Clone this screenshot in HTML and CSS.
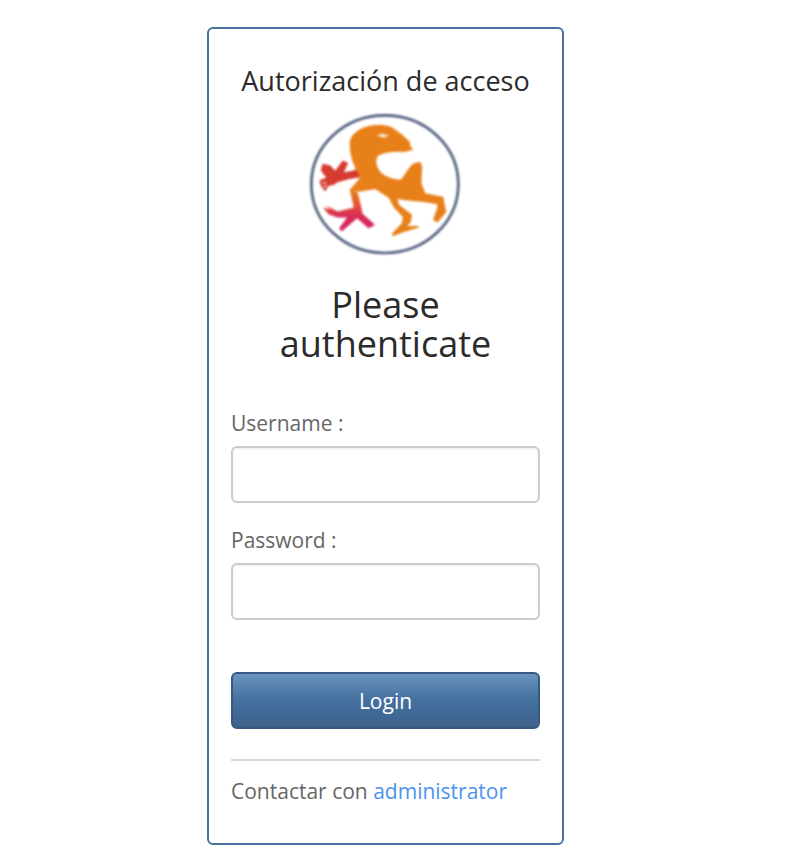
FILE: index.html
```html
<!DOCTYPE html>
<html lang="es">
<head>
  <meta charset="UTF-8">
  <title>Autorización de acceso</title>
  <link rel="stylesheet" href="styles.css">
</head>
<body>

  <div class="page">
    <form class="card">
      <h2 class="app-title">Autorización de acceso</h2>

      <svg class="logo" viewBox="50 30 470 440" width="157" height="147" aria-label="logo">
        <defs>
          <linearGradient id="leg" x1="0" y1="0" x2="0" y2="1">
            <stop offset="0" stop-color="#e8801a"/>
            <stop offset="0.4" stop-color="#e2503a"/>
            <stop offset="0.65" stop-color="#d82a5a"/>
            <stop offset="1" stop-color="#d4265c"/>
          </linearGradient>
        </defs>
        <ellipse cx="283" cy="252" rx="220" ry="206" fill="#fff" stroke="#4e5c7c" stroke-width="8"/>
        <!-- brazo -->
        <path class="limb" d="M215 228 L176 234 L134 246 L112 234 L94 210 L98 194 L118 198 L134 216 L158 184 L170 190 L156 220 L186 214 L210 207 Z" fill="#d63a30" stroke="#d63a30"/>
        <path class="limb" d="M134 240 L106 236 L90 242 L94 256 L104 270 L112 256 L134 250 Z" fill="#d63a30" stroke="#d63a30"/>
        <path d="M96 246 L108 250 M100 262 L108 256" stroke="#fff" stroke-width="3" fill="none"/>
        <!-- pierna y pie -->
        <path class="limb" d="M178 268 L190 322 L142 334 L104 314 L120 328 L98 322 L114 342 L142 352 L170 352 L146 384 L154 394 L200 354 L234 384 L254 374 L216 340 L212 318 L202 278 Z" fill="url(#leg)"/>
        <!-- cuerpo -->
        <path class="limb" d="M215 87 C240 75 280 73 305 85 L335 107 L356 127 L356 136 L364 148 L340 153 C310 151 272 154 259 168 C251 182 255 202 268 217 C282 232 310 242 332 240 C345 228 356 200 370 192 L388 188 L392 200 L390 250 L403 282 L456 292 L464 335 L440 364 L430 358 L442 325 L442 310 L400 303 L345 298 L318 293 L323 315 L362 345 L358 365 L344 380 L382 380 L340 393 L307 405 L308 400 L336 370 L340 350 L312 320 L297 292 L255 264 L205 272 L180 270 L213 232 C195 205 180 170 180 130 C180 112 195 97 215 87 Z" fill="#e8801a" stroke="#e8801a"/>
        <path d="M258 106 L276 100 L296 106 L280 114 Z" fill="#f6e0c0"/>
      </svg>

      <h1 class="heading">Please authenticate</h1>

      <label class="field-label" for="username">Username :</label>
      <input class="field" id="username" type="text">

      <label class="field-label" for="password">Password :</label>
      <input class="field" id="password" type="password">

      <button class="login-btn" type="submit">Login</button>

      <hr class="divider">

      <p class="contact">Contactar con <a href="#">administrator</a></p>
    </form>
  </div>

</body>
</html>
```

FILE: styles.css
```css
* { box-sizing: border-box; }
body { margin: 0; background: #fff; font-family: 'Open Sans', 'Liberation Sans', sans-serif; color: #333; }
.page { display: flex; justify-content: center; padding: 27px 33px 12px 0; }
.card { width: 357px; height: 818px; padding: 35px 22px 0; border: 2px solid #4a72a0; border-radius: 6px; display: flex; flex-direction: column; }
.app-title { margin: 0; font-size: 27px; font-weight: 400; line-height: 34px; text-align: center; color: #2b2b2b; }
.logo { display: block; margin: 12px auto 0; filter: blur(0.8px); }
.limb { stroke-width: 5; stroke-linejoin: round; }
.heading { margin: 28px 0 0; font-size: 36px; font-weight: 400; line-height: 39px; text-align: center; color: #2b2b2b; }
.field-label { display: block; margin-top: 45px; font-size: 21px; line-height: 30px; color: #666; }
.field { display: block; width: 100%; height: 57px; margin-top: 8px; padding: 6px 12px; border: 2px solid #ccc; border-radius: 6px; background: #fff; box-shadow: inset 0 1px 2px rgba(0,0,0,0.08); font-size: 20px; }
.field + .field-label { margin-top: 22px; }
.login-btn { display: block; width: 100%; height: 57px; margin-top: 52px; border: 2px solid #38597f; border-radius: 6px; background: linear-gradient(#6a93bd, #44709f 50%, #3e628c); color: #fff; font-family: inherit; font-size: 21px; cursor: pointer; }
.divider { width: 100%; height: 2px; margin: 30px 0 0; border: none; background: #d8d8d8; }
.contact { margin: 15px 0 0; font-size: 21px; line-height: 30px; color: #666; }
.contact a { color: #4a94f0; text-decoration: none; }
```
